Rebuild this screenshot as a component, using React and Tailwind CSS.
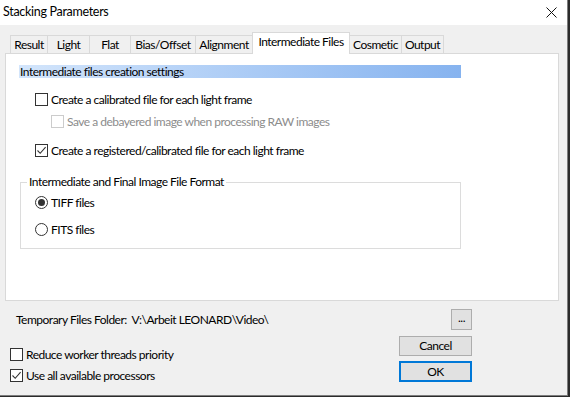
import React from "react"

const font = { fontFamily: 'Lato, "Liberation Sans", sans-serif' }

function CheckBox({ checked, disabled }) {
  return (
    <span
      className={`flex h-[13px] w-[13px] shrink-0 items-center justify-center border bg-white ${
        disabled ? "border-[#cccccc]" : "border-[#333333]"
      }`}
    >
      {checked && (
        <svg width="11" height="11" viewBox="0 0 11 11">
          <path d="M1.5 5.5 L4.2 8.3 L9.6 2.2" fill="none" stroke="#333" strokeWidth="1.1" />
        </svg>
      )}
    </span>
  )
}

function Radio({ checked }) {
  return (
    <span className="flex h-[13px] w-[13px] shrink-0 items-center justify-center rounded-full border border-[#333333] bg-white">
      {checked && <span className="h-[7px] w-[7px] rounded-full bg-[#333333]" />}
    </span>
  )
}

function Check({ label, checked, disabled, className = "" }) {
  return (
    <div className={`flex h-[13px] items-center gap-[3px] whitespace-nowrap ${className}`}>
      <CheckBox checked={checked} disabled={disabled} />
      <span className={`leading-none ${disabled ? "text-[#8c8c8c]" : "text-black"}`}>{label}</span>
    </div>
  )
}

const tabs = [
  { name: "Result", w: 38 },
  { name: "Light", w: 43 },
  { name: "Flat", w: 42 },
  { name: "Bias/Offset", w: 66 },
  { name: "Alignment", w: 58 },
  { name: "Intermediate Files", w: 98, active: true },
  { name: "Cosmetic", w: 53 },
  { name: "Output", w: 43 },
]

export default function App() {
  return (
    <div
      className="h-[397px] w-[570px] overflow-hidden bg-[#2b2b2b] text-[12px] tracking-[-0.5px] text-black"
      style={font}
    >
      <div className="h-[396px] w-[568px] border-r border-b border-[#7d7d7d] bg-[#f0f0f0]">
        {/* title bar */}
        <div className="flex h-[25px] items-center justify-between bg-white pl-[3px] pr-[10px]">
          <span className="text-[12.5px] leading-none tracking-[-0.3px]">Stacking Parameters</span>
          <svg width="11" height="11" viewBox="0 0 11 11">
            <path d="M0.5 0.5 L10.5 10.5 M10.5 0.5 L0.5 10.5" stroke="#111" strokeWidth="1" />
          </svg>
        </div>

        <div className="pl-[5px]">
          {/* tabs */}
          <div className="mt-[7px] flex h-[21px] items-end whitespace-nowrap pl-[5px]">
            {tabs.map((t) =>
              t.active ? (
                <div
                  key={t.name}
                  style={{ width: t.w }}
                  className="relative z-10 -mb-px -ml-px flex h-[22px] items-start justify-center border border-b-0 border-[#d9d9d9] bg-white pt-[3px] leading-none"
                >
                  {t.name}
                </div>
              ) : (
                <div
                  key={t.name}
                  style={{ width: t.w }}
                  className="-ml-px flex h-[18px] items-center justify-center border border-b-0 border-[#d9d9d9] bg-[#f0f0f0] leading-none first:ml-0"
                >
                  {t.name}
                </div>
              )
            )}
          </div>

          {/* panel */}
          <div className="h-[248px] w-[554px] border border-[#d9d9d9] bg-white">
            <div className="ml-[13px] mt-[11px] flex h-[13px] w-[442px] items-center bg-gradient-to-r from-[#d3e5fb] to-[#86b3ef] pl-[1px] leading-none">
              Intermediate files creation settings
            </div>

            <div className="ml-[29px] mt-[15px] flex flex-col">
              <Check label="Create a calibrated file for each light frame" />
              <Check
                className="ml-[16px] mt-[9px]"
                disabled
                label="Save a debayered image when processing RAW images"
              />
              <Check className="mt-[16px]" checked label="Create a registered/calibrated file for each light frame" />
            </div>

            <fieldset className="ml-[14px] mt-[19px] h-[73px] w-[441px] border border-[#dcdcdc] px-[14px]">
              <legend className="-ml-[8px] px-[2px] leading-none">Intermediate and Final Image File Format</legend>
              <div className="mt-[8px] flex h-[13px] items-center gap-[3px]">
                <Radio checked />
                <span className="leading-none">TIFF files</span>
              </div>
              <div className="mt-[14px] flex h-[13px] items-center gap-[3px]">
                <Radio />
                <span className="leading-none">FITS files</span>
              </div>
            </fieldset>
          </div>
        </div>

        {/* bottom */}
        <div className="pr-[95px]">
          <div className="mt-[8px] flex h-[21px] items-center pl-[16px]">
            <span className="whitespace-nowrap leading-none">Temporary Files Folder:&nbsp; V:\Arbeit LEONARD\Video\</span>
            <button className="ml-auto flex h-[21px] w-[21px] items-end justify-center border border-[#adadad] bg-[#e1e1e1] pb-[5px] leading-none">
              ...
            </button>
          </div>

          <div className="mt-[6px] flex">
            <div className="flex flex-1 flex-col pl-[10px] pt-[12px]">
              <Check label="Reduce worker threads priority" />
              <Check className="mt-[8px]" checked label="Use all available processors" />
            </div>
            <div className="flex w-[73px] flex-col gap-[5px]">
              <button className="h-[20px] w-full border border-[#adadad] bg-[#e1e1e1] leading-none">Cancel</button>
              <button className="h-[21px] w-full border-2 border-[#0078d7] bg-[#e1e1e1] leading-none">OK</button>
            </div>
          </div>
        </div>
      </div>
    </div>
  )
}
